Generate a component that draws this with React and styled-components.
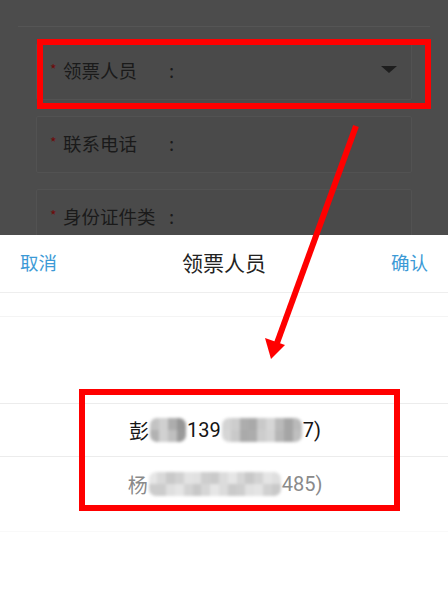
import React from "react";
import styled, { createGlobalStyle } from "styled-components";

const Global = createGlobalStyle`
  html, body {
    margin: 0;
    padding: 0;
    background: #ffffff;
  }
  body {
    font-family: "Noto Sans CJK SC", "Noto Sans", sans-serif;
  }
`;

const Screen = styled.div`
  position: relative;
  width: 448px;
  height: 612px;
  overflow: hidden;
  display: flex;
  flex-direction: column;
`;

const Dimmed = styled.div`
  height: 235px;
  flex-shrink: 0;
  background: #4c4c4c;
  overflow: hidden;
  padding-top: 26px;
  box-sizing: border-box;
`;

const Rule = styled.div`
  margin: 0 18px;
  height: 1px;
  background: #555555;
`;

const Fields = styled.div`
  display: flex;
  flex-direction: column;
  gap: 16px;
  padding: 16px 0 0 36px;
`;

const Field = styled.div`
  width: 376px;
  height: 57px;
  box-sizing: border-box;
  border: 1px solid #525252;
  background: #4a4a4a;
  border-radius: 2px;
  display: flex;
  align-items: center;
  padding: 0 14px 4px 13px;
  color: #1a1a1a;
  font-size: 18.5px;
`;

const Star = styled.span`
  color: #6e0b0b;
  font-size: 14px;
  width: 13px;
  margin-top: -2px;
`;

const Label = styled.span`
  width: 106px;
`;

const Colon = styled.span`
  flex: 1;
`;

const Caret = styled.span`
  width: 0;
  height: 0;
  border-left: 8px solid transparent;
  border-right: 8px solid transparent;
  border-top: 7px solid #1e1e1e;
`;

const Sheet = styled.div`
  flex: 1;
  background: #ffffff;
  display: flex;
  flex-direction: column;
`;

const Header = styled.div`
  height: 58px;
  flex-shrink: 0;
  border-bottom: 1px solid #eeeeee;
  display: flex;
  align-items: center;
  justify-content: space-between;
  padding: 0 20px 3px;
  box-sizing: border-box;
`;

const Action = styled.span`
  color: #3c9ad6;
  font-size: 18.5px;
  width: 60px;
  text-align: ${(p) => (p.$right ? "right" : "left")};
`;

const Title = styled.span`
  color: #222222;
  font-size: 21px;
`;

const Picker = styled.div`
  flex: 1;
  display: flex;
  flex-direction: column;
`;

const Shade = styled.div`
  height: ${(p) => p.$h}px;
  flex-shrink: 0;
  border-bottom: 1px solid ${(p) => p.$line};
  box-sizing: border-box;
`;

const Row = styled.div`
  height: 54px;
  flex-shrink: 0;
  box-sizing: border-box;
  border-top: ${(p) => (p.$selected ? "1px solid #ececec" : "none")};
  border-bottom: ${(p) => (p.$selected ? "1px solid #ececec" : "none")};
  display: flex;
  align-items: center;
  justify-content: center;
  padding-left: 2px;
  font-family: "Roboto", "Noto Sans CJK SC", sans-serif;
  font-size: 20px;
  color: ${(p) => (p.$selected ? "#151515" : "#8a8a8a")};
`;

const Mosaic = styled.span`
  display: inline-grid;
  grid-template-columns: repeat(${(p) => p.$cols}, 1fr);
  grid-template-rows: 1fr 1fr;
  width: ${(p) => p.$w}px;
  height: 24px;
  margin: 0 ${(p) => p.$gap}px;
  filter: blur(1.5px);
  border-radius: 7px;
  overflow: hidden;
`;

const Cell = styled.span``;

const Frame = styled.div`
  position: absolute;
  border: 6px solid #ff0000;
  box-sizing: border-box;
  pointer-events: none;
`;

const Arrow = styled.svg`
  position: absolute;
  left: 0;
  top: 0;
  pointer-events: none;
`;

const shades = (seed, n, base, spread) =>
  Array.from({ length: n }, (_, i) => {
    const v = Math.round(base + ((Math.sin(seed * 13.1 + i * 7.7) + 1) / 2) * spread);
    return `rgb(${v},${v},${v})`;
  });

const Blur = ({ w, seed, base, spread, gap = 1 }) => {
  const cols = Math.round(w / 9);
  const list = shades(seed, cols * 2, base, spread);
  return (
    <Mosaic $w={w} $cols={cols} $gap={gap}>
      {list.map((c, i) => (
        <Cell key={i} style={{ background: c }} />
      ))}
    </Mosaic>
  );
};

const fields = [
  { label: "领票人员", caret: true },
  { label: "联系电话" },
  { label: "身份证件类" },
];

export default function App() {
  return (
    <Screen>
      <Global />
      <Dimmed>
        <Rule />
        <Fields>
          {fields.map((f) => (
            <Field key={f.label}>
              <Star>*</Star>
              <Label>{f.label}</Label>
              <Colon>:</Colon>
              {f.caret && <Caret />}
            </Field>
          ))}
        </Fields>
      </Dimmed>
      <Sheet>
        <Header>
          <Action>取消</Action>
          <Title>领票人员</Title>
          <Action $right>确认</Action>
        </Header>
        <Picker>
          <Shade $h={24} $line="#f4f4f4" />
          <Shade $h={86} $line="transparent" />
          <Row $selected>
            彭<Blur w={36} seed={1} base={150} spread={60} />139
            <Blur w={80} seed={2} base={165} spread={50} />7)
          </Row>
          <Row>
            杨<Blur w={132} seed={3} base={200} spread={30} />485)
          </Row>
          <Shade $h={21} $line="#f9f9f9" />
        </Picker>
      </Sheet>
      <Frame style={{ left: 37, top: 39, width: 394, height: 70 }} />
      <Frame style={{ left: 79, top: 389, width: 321, height: 122 }} />
      <Arrow width="448" height="612" viewBox="0 0 448 612">
        <line x1="356" y1="126" x2="277" y2="343" stroke="#ff0000" strokeWidth="6" />
        <polygon points="271,359 265,338 285,345" fill="#ff0000" />
      </Arrow>
    </Screen>
  );
}
